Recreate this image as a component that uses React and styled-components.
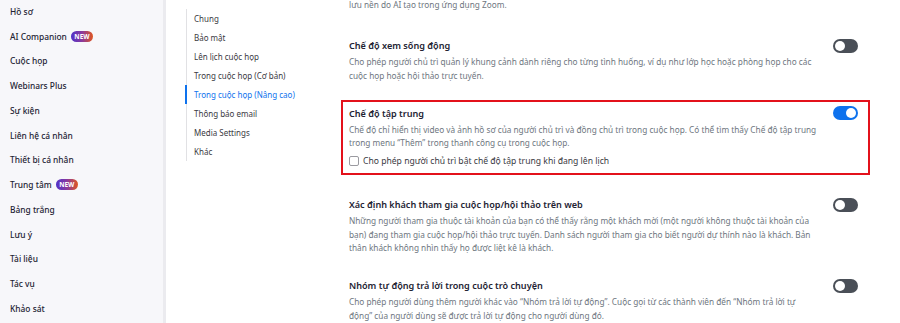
import React from 'react';
import styled, { createGlobalStyle } from 'styled-components';

const GlobalStyle = createGlobalStyle`
  html, body, #root {
    margin: 0;
    height: 100%;
    overflow: hidden;
    background: #ffffff;
  }
  body {
    font-family: 'Noto Sans', 'Open Sans', sans-serif;
  }
`;

const sideItems = [
  { label: 'Hồ sơ' },
  { label: 'AI Companion', isNew: true },
  { label: 'Cuộc họp' },
  { label: 'Webinars Plus' },
  { label: 'Sự kiện' },
  { label: 'Liên hệ cá nhân' },
  { label: 'Thiết bị cá nhân' },
  { label: 'Trung tâm', isNew: true },
  { label: 'Bảng trắng' },
  { label: 'Lưu ý' },
  { label: 'Tài liệu' },
  { label: 'Tác vụ' },
  { label: 'Khảo sát' },
];

const subItems = [
  'Chung',
  'Bảo mật',
  'Lên lịch cuộc họp',
  'Trong cuộc họp (Cơ bản)',
  'Trong cuộc họp (Nâng cao)',
  'Thông báo email',
  'Media Settings',
  'Khác',
];

const settings = [
  {
    title: 'Chế độ xem sống động',
    desc: 'Cho phép người chủ trì quản lý khung cảnh dành riêng cho từng tình huống, ví dụ như lớp học hoặc phòng họp cho các cuộc họp hoặc hội thảo trực tuyến.',
    on: false,
  },
  {
    title: 'Chế độ tập trung',
    desc: 'Chế độ chỉ hiển thị video và ảnh hồ sơ của người chủ trì và đồng chủ trì trong cuộc họp. Có thể tìm thấy Chế độ tập trung trong menu “Thêm” trong thanh công cụ trong cuộc họp.',
    on: true,
    highlighted: true,
    option: 'Cho phép người chủ trì bật chế độ tập trung khi đang lên lịch',
  },
  {
    title: 'Xác định khách tham gia cuộc họp/hội thảo trên web',
    desc: 'Những người tham gia thuộc tài khoản của bạn có thể thấy rằng một khách mời (một người không thuộc tài khoản của bạn) đang tham gia cuộc họp/hội thảo trực tuyến. Danh sách người tham gia cho biết người dự thính nào là khách. Bản thân khách không nhìn thấy họ được liệt kê là khách.',
    on: false,
  },
  {
    title: 'Nhóm tự động trả lời trong cuộc trò chuyện',
    desc: 'Cho phép người dùng thêm người khác vào “Nhóm trả lời tự động”. Cuộc gọi từ các thành viên đến “Nhóm trả lời tự động” của người dùng sẽ được trả lời tự động cho người dùng đó.',
    on: false,
  },
];

const Page = styled.div`
  display: flex;
  height: 100%;
`;

const Sidebar = styled.nav`
  width: 163px;
  flex-shrink: 0;
  background: #f7f7fa;
  border-right: 3px solid #ebebef;
  display: flex;
  flex-direction: column;
  margin-top: -1px;
`;

const SideItem = styled.div`
  height: 24.75px;
  display: flex;
  align-items: center;
  gap: 4px;
  padding-left: 10px;
  font-size: 8.4px;
  font-weight: 500;
  color: #232333;
`;

const NewBadge = styled.span`
  display: inline-flex;
  align-items: center;
  justify-content: center;
  height: 11px;
  padding: 0 3.5px;
  border-radius: 6px;
  background: linear-gradient(90deg, #4f32c9 0%, #8a3a9e 50%, #e0561e 100%);
  color: #ffffff;
  font-size: 6.5px;
  font-weight: 700;
`;

const SubNavColumn = styled.div`
  width: 175px;
  flex-shrink: 0;
  padding: 9px 0 0 20px;
  box-sizing: border-box;
`;

const SubList = styled.div`
  border-left: 1px solid #e1e1e4;
  display: flex;
  flex-direction: column;
`;

const SubItem = styled.div`
  height: 19px;
  line-height: 19px;
  padding-left: 7px;
  margin-left: ${(p) => (p.$active ? '-2px' : '0')};
  border-left: ${(p) => (p.$active ? '2px solid #0e72ed' : 'none')};
  font-size: 8px;
  color: ${(p) => (p.$active ? '#0e72ed' : '#3a3a3f')};
`;

const Main = styled.main`
  width: 529px;
  display: flex;
  flex-direction: column;
  gap: 11px;
`;

const Block = styled.section`
  border: 2px solid ${(p) => (p.$highlighted ? '#e3111b' : 'transparent')};
  padding: 4px 10px 5px 6px;
  margin-bottom: ${(p) => (p.$highlighted ? '6px' : '0')};
  display: flex;
  flex-direction: column;
`;

const TailBlock = styled(Block)`
  padding-top: 0;
  margin-top: -4px;
  margin-bottom: 3px;
`;

const TitleRow = styled.div`
  display: flex;
  align-items: center;
  justify-content: space-between;
  height: 14px;
`;

const Title = styled.div`
  font-size: 9.1px;
  font-weight: 600;
  color: #232333;
`;

const Desc = styled.p`
  margin: ${(p) => (p.$tail ? '0' : '2.5px 0 0')};
  max-width: 470px;
  font-size: 8.25px;
  line-height: 13.5px;
  color: #6e7680;
`;

const Track = styled.span`
  position: relative;
  width: 25px;
  height: 14px;
  border-radius: 7px;
  background: ${(p) => (p.$on ? '#0e72ed' : '#4a4f57')};
  flex-shrink: 0;
`;

const Knob = styled.span`
  position: absolute;
  top: 2px;
  left: ${(p) => (p.$on ? '13px' : '2px')};
  width: 10px;
  height: 10px;
  border-radius: 50%;
  background: #ffffff;
`;

const OptionRow = styled.label`
  display: flex;
  align-items: center;
  gap: 4px;
  margin-top: 4px;
  height: 14px;
  font-size: 8.6px;
  color: #3a3a3f;
`;

const Box = styled.span`
  width: 8px;
  height: 8px;
  border: 1px solid #9a9aa0;
  border-radius: 2px;
  background: #ffffff;
`;

const Toggle = ({ on }) => (
  <Track $on={on}>
    <Knob $on={on} />
  </Track>
);

const App = () => (
  <>
    <GlobalStyle />
    <Page>
      <Sidebar>
        {sideItems.map((item) => (
          <SideItem key={item.label}>
            {item.label}
            {item.isNew && <NewBadge>NEW</NewBadge>}
          </SideItem>
        ))}
      </Sidebar>

      <SubNavColumn>
        <SubList>
          {subItems.map((label, i) => (
            <SubItem key={label} $active={i === 4}>
              {label}
            </SubItem>
          ))}
        </SubList>
      </SubNavColumn>

      <Main>
        <TailBlock>
          <Desc $tail>lưu nền do AI tạo trong ứng dụng Zoom.</Desc>
        </TailBlock>
        {settings.map((s) => (
          <Block key={s.title} $highlighted={s.highlighted}>
            <TitleRow>
              <Title>{s.title}</Title>
              <Toggle on={s.on} />
            </TitleRow>
            <Desc>{s.desc}</Desc>
            {s.option && (
              <OptionRow>
                <Box />
                {s.option}
              </OptionRow>
            )}
          </Block>
        ))}
      </Main>
    </Page>
  </>
);

export default App;
